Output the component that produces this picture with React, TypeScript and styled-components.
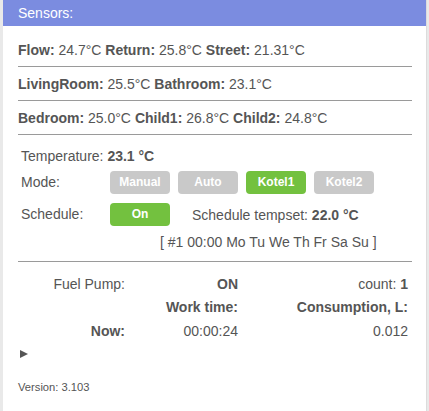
import React from "react";
import styled, { createGlobalStyle } from "styled-components";

const Global = createGlobalStyle`
  html, body { margin: 0; padding: 0; background: #e9e9e9; }
  body { font-family: "Liberation Sans", Arial, sans-serif; color: #555; }
`;

const Panel = styled.div`
  margin-left: 3px;
  width: 424px;
  height: 411px;
  background: #fff;
  border-right: 1px solid #dcdcdc;
  box-sizing: border-box;
`;

const Header = styled.div`
  height: 26px;
  background: #7b8ce0;
  color: #fff;
  font-size: 14px;
  line-height: 26px;
  padding-left: 15px;
`;

const Body = styled.div`
  padding: 0 14px 0 15px;
`;

const SensorRow = styled.div`
  font-size: 14px;
  line-height: 16px;
  padding: 9px 0 8px;
  border-bottom: 1px solid #9a9a9a;
  &:first-child { padding-top: 16px; }
`;

const Controls = styled.div`
  padding: 10px 0 0 3px;
  display: flex;
  flex-direction: column;
  font-size: 14px;
`;

const Line = styled.div<{ $gap?: number }>`
  display: flex;
  align-items: center;
  margin-top: ${(p) => p.$gap ?? 0}px;
`;

const Label = styled.div`
  width: 89px;
  line-height: 23px;
`;

const Temp = styled.div`
  line-height: 22px;
`;

const Buttons = styled.div`
  display: flex;
  gap: 8px;
  align-items: center;
`;

const Btn = styled.div<{ $on?: boolean }>`
  width: 60px;
  height: 23px;
  line-height: 23px;
  border-radius: 4px;
  text-align: center;
  font-size: 12px;
  font-weight: bold;
  color: #fff;
  background: ${(p) => (p.$on ? "#73c13f" : "#c9c9c9")};
`;

const ScheduleText = styled.div`
  margin-left: 14px;
`;

const Week = styled.div`
  padding-left: 139px;
  margin-top: 4px;
  line-height: 24px;
`;

const Divider = styled.div`
  margin-top: 7px;
  border-bottom: 1px solid #9a9a9a;
`;

const Table = styled.div`
  display: grid;
  grid-template-columns: 107px 113px 170px;
  grid-auto-rows: 23.5px;
  padding-top: 10px;
  font-size: 14px;
  align-items: center;
  text-align: right;
`;

const Cell = styled.div<{ $bold?: boolean }>`
  font-weight: ${(p) => (p.$bold ? "bold" : "normal")};
`;

const Summary = styled.div`
  margin-top: 7px;
  margin-left: 2px;
  width: 0;
  height: 0;
  border-top: 4px solid transparent;
  border-bottom: 4px solid transparent;
  border-left: 8px solid #555;
`;

const Version = styled.div`
  margin-top: 23px;
  font-size: 11.2px;
`;

export default function App() {
  return (
    <>
      <Global />
      <Panel>
        <Header>Sensors:</Header>
        <Body>
          <SensorRow>
            <b>Flow:</b> 24.7°C <b>Return:</b> 25.8°C <b>Street:</b> 21.31°C
          </SensorRow>
          <SensorRow>
            <b>LivingRoom:</b> 25.5°C <b>Bathroom:</b> 23.1°C
          </SensorRow>
          <SensorRow>
            <b>Bedroom:</b> 25.0°C <b>Child1:</b> 26.8°C <b>Child2:</b> 24.8°C
          </SensorRow>
          <Controls>
            <Temp>
              Temperature: <b>23.1 °C</b>
            </Temp>
            <Line $gap={4}>
              <Label>Mode:</Label>
              <Buttons>
                <Btn>Manual</Btn>
                <Btn>Auto</Btn>
                <Btn $on>Kotel1</Btn>
                <Btn>Kotel2</Btn>
              </Buttons>
            </Line>
            <Line $gap={9}>
              <Label>Schedule:</Label>
              <Buttons>
                <Btn $on>On</Btn>
                <ScheduleText>
                  Schedule tempset: <b>22.0 °C</b>
                </ScheduleText>
              </Buttons>
            </Line>
            <Week>[ #1 00:00 Mo Tu We Th Fr Sa Su ]</Week>
          </Controls>
          <Divider />
          <Table>
            <Cell>Fuel Pump:</Cell>
            <Cell $bold>ON</Cell>
            <Cell>
              count: <b>1</b>
            </Cell>
            <Cell />
            <Cell $bold>Work time:</Cell>
            <Cell $bold>Consumption, L:</Cell>
            <Cell $bold>Now:</Cell>
            <Cell>00:00:24</Cell>
            <Cell>0.012</Cell>
          </Table>
          <Summary />
          <Version>Version: 3.103</Version>
        </Body>
      </Panel>
    </>
  );
}
